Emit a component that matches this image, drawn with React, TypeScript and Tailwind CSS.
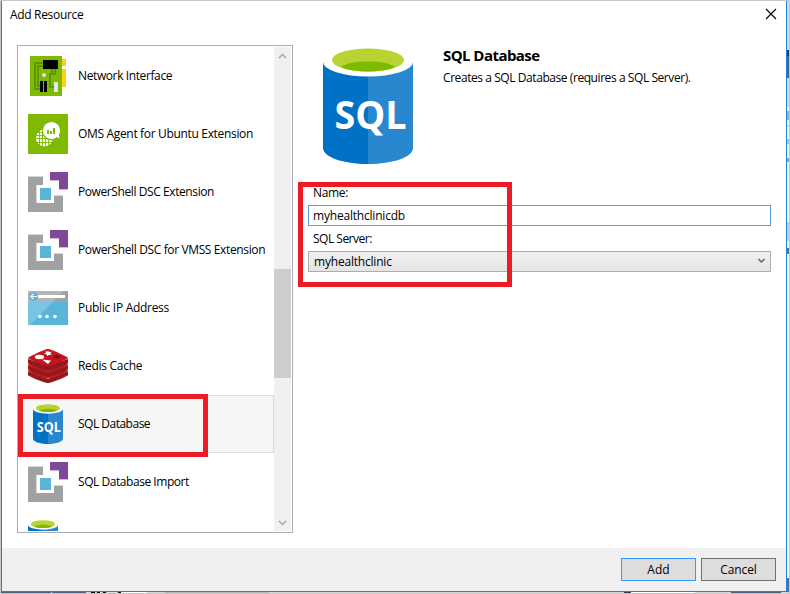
import React from "react";

function NetworkIcon() {
  return (
    <svg width="40" height="40" viewBox="0 0 40 40" shapeRendering="crispEdges">
      <path d="M34 3h4v7h-4zM34 13h4v18h-4z" fill="#fcd116" />
      <path d="M2 0h32v40H2z" fill="#7fba00" />
      <path d="M15 7H7v26h5M15 10h-5v20h2M27 13v5h-5v13h4M24 13v5" fill="none" stroke="#5e9400" strokeWidth="2" />
      <path d="M15 4h15v9H15zM12 25h3v11h-3zM16 25h3v11h-3z" fill="#000" />
      <path d="M26 26h4v10h-4z" fill="#e6e6e6" />
      <circle cx="16" cy="19" r="2" fill="#e6e6e6" shapeRendering="auto" />
    </svg>
  );
}

function OmsIcon() {
  return (
    <svg width="40" height="40" viewBox="0 0 40 40">
      <path d="M0 0h40v40H0z" fill="#7fba00" />
      <circle cx="16.5" cy="24" r="8.5" fill="#fff" />
      <path d="M11.5 15v18M14.5 15v18M17.5 15v18M20.5 15v18M7 18.5h18M7 21.5h18M7 24.5h18M7 28.5h18" stroke="#7fba00" strokeWidth="0.9" />
      <circle cx="23.5" cy="17" r="9.6" fill="#7fba00" />
      <circle cx="23.5" cy="16.5" r="8.6" fill="#fff" />
      <path d="M27 22l4.500 2.500-1-6z" fill="#fff" />
      <path d="M19 16h2v4h-2zM22 17h2v3h-2zM25 14h2v6h-2z" fill="#7fba00" />
    </svg>
  );
}

function ExtensionIcon() {
  return (
    <svg width="40" height="40" viewBox="0 0 40 40" shapeRendering="crispEdges">
      <path d="M0 4h15v1H0zM8 12h7v1H8zM26 23h9v1h-9z" fill="#d5d6d8" />
      <path d="M0 5h15v8H9v18h17v-7h9v16H0z" fill="#a0a1a2" />
      <path d="M8 13h1v18H8z" fill="#d5d6d8" />
      <path d="M22 0h18v17h-9V8h-9z" fill="#804998" />
      <path d="M22 8h9v1h-9zM31 17h9v1h-9z" fill="#d0b8da" />
      <path d="M12 16h11v12H12z" fill="#59b4d9" />
    </svg>
  );
}

function PublicIpIcon() {
  return (
    <svg width="40" height="34" viewBox="0 0 40 34">
      <path d="M0 0h40v34H0z" fill="#59b4d9" />
      <path d="M0 0h40v10H0z" fill="#a0a1a2" />
      <path d="M0 10h26L2 34H0z" fill="#7ac3e1" />
      <path d="M0 0h36L26 10H0z" fill="#b3b4b5" />
      <path d="M10 4h27v3H10z" fill="#fff" />
      <circle cx="5.500" cy="5.500" r="4.500" fill="#59b4d9" />
      <path d="M9 5.500H3M5.500 2.800L2.800 5.500l2.700 2.700" fill="none" stroke="#fff" strokeWidth="1.200" />
      <circle cx="12" cy="25.500" r="1.800" fill="#fff" />
      <circle cx="19" cy="25.500" r="1.800" fill="#fff" />
      <circle cx="27" cy="25.500" r="1.800" fill="#fff" />
    </svg>
  );
}

function RedisIcon() {
  return (
    <svg width="40" height="34" viewBox="0 0 40 34">
      <path d="M0 22l20 8 20-8v4c0 1-16 8-20 8S0 27 0 26z" fill="#921a1d" />
      <path d="M0 21l20-7 20 7c0 2-16 8.500-20 8.500S0 23 0 21z" fill="#c4161c" />
      <path d="M0 16l20 8 20-8v4c0 1-16 7.500-20 7.500S0 21 0 20z" fill="#921a1d" />
      <path d="M0 15l20-7 20 7c0 2-16 8.500-20 8.500S0 17 0 15z" fill="#c4161c" />
      <path d="M0 10l20 7 20-7v4c0 1-16 7.500-20 7.500S0 15 0 14z" fill="#921a1d" />
      <path d="M0 9C0 8 17 0 20 0s20 8 20 9-16 8-20 8S0 10 0 9z" fill="#c4161c" />
      <ellipse cx="11.500" cy="8" rx="4.600" ry="2.200" fill="#fff" />
      <path d="M14 10.500l9 1-3 3.500z" fill="#fff" />
      <path d="M20 1.500l1 1.500 3-.3-1.700 1.500 1.700 1.500-3 .1-1.500 1.500-1-2-2.500-.3 2-1.300-1-1.500 2.200.5z" fill="#fff" />
      <path d="M25 8l4-2.500L33.500 8 29 10z" fill="#8a1014" />
    </svg>
  );
}

function SqlIcon({ width, height, label = true }: { width: number; height: number; label?: boolean }) {
  return (
    <svg width={width} height={height} viewBox="0 0 90 116" preserveAspectRatio="none" className="shrink-0">
      <path d="M0 14v86c0 9 20 16 45 16V14z" fill="#0072c6" />
      <path d="M45 116c25 0 45-7 45-16V14H45z" fill="#2987cf" />
      <ellipse cx="45" cy="14" rx="45" ry="14.500" fill="#fff" />
      <ellipse cx="45" cy="12" rx="36" ry="11.500" fill="#b8d432" />
      <path d="M18 19c5-4 15-5.500 27-5.500S67 15 72 19c-6 3-16 4.500-27 4.500S24 22 18 19z" fill="#7fba00" />
      {label && (
        <text x="11.500" y="81" textLength="72" lengthAdjust="spacingAndGlyphs" fill="#fff" fontSize="40" fontWeight="700" fontFamily="'Open Sans', 'Noto Sans', sans-serif">SQL</text>
      )}
    </svg>
  );
}

function Chevron({ up = false, color }: { up?: boolean; color: string }) {
  return (
    <svg width="9" height="6" viewBox="0 0 9 6">
      <path d={up ? "M1 5l3.500-3.500L8 5" : "M1 1l3.500 3.500L8 1"} fill="none" stroke={color} strokeWidth="1.400" />
    </svg>
  );
}

const resources = [
  { name: "Network Interface", icon: <NetworkIcon />, tracking: "tracking-[-0.39px]" },
  { name: "OMS Agent for Ubuntu Extension", icon: <OmsIcon />, tracking: "tracking-[-0.33px]" },
  { name: "PowerShell DSC Extension", icon: <ExtensionIcon />, tracking: "tracking-[-0.41px]" },
  { name: "PowerShell DSC for VMSS Extension", icon: <ExtensionIcon />, tracking: "tracking-[-0.37px]" },
  { name: "Public IP Address", icon: <PublicIpIcon />, tracking: "tracking-[-0.29px]" },
  { name: "Redis Cache", icon: <RedisIcon />, tracking: "tracking-[-0.3px]" },
  { name: "SQL Database", icon: <SqlIcon width={30} height={40} />, tracking: "tracking-[-0.5px]", selected: true },
  { name: "SQL Database Import", icon: <ExtensionIcon />, tracking: "tracking-[-0.45px]" },
];

function ResourceList() {
  return (
    <div className="flex h-[488px] w-[276px] shrink-0 border border-[#abadb3] p-px">
      <div className="h-[484px] flex-1 overflow-hidden">
        {resources.map((r) => (
          <div
            key={r.name}
            className={
              "flex h-[58px] items-center border pl-2 " +
              (r.selected ? "border-[#dadada] bg-[#f6f6f6]" : "border-transparent")
            }
          >
            <div className="flex w-10 shrink-0 justify-center">{r.icon}</div>
            <span className={"ml-[10px] whitespace-nowrap " + r.tracking}>{r.name}</span>
          </div>
        ))}
        <div className="flex h-[58px] items-center border border-transparent pl-2">
          <SqlIcon width={30} height={40} label={false} />
        </div>
      </div>
      <div className="flex w-[17px] flex-col items-center bg-[#f0f0f0]">
        <div className="flex h-[17px] items-center"><Chevron up color="#a3a3a3" /></div>
        <div className="mt-[205px] h-[109px] w-full bg-[#cdcdcd]" />
        <div className="mt-auto flex h-[17px] items-center"><Chevron color="#a3a3a3" /></div>
      </div>
    </div>
  );
}

function Details() {
  return (
    <section className="ml-[15px] w-[463px]">
      <div className="flex h-[120px] pl-[15px] pt-[3px]">
        <SqlIcon width={90} height={116} />
        <div className="ml-[30px]">
          <h1 className="mt-[-3px] text-[15px] font-bold leading-[20px] tracking-[-0.55px]">SQL Database</h1>
          <p className="mt-[5px] whitespace-nowrap leading-4 tracking-[-0.43px]">Creates a SQL Database (requires a SQL Server).</p>
        </div>
      </div>
      <label className="mt-[20px] block pl-[5px] leading-4 tracking-[-0.35px]">Name:</label>
      <div className="mt-[4px] flex h-[21px] items-center border border-[#569de5] pl-[4px] tracking-[-0.2px]">myhealthclinicdb</div>
      <label className="mt-[5px] block pl-[5px] leading-4 tracking-[-0.5px]">SQL Server:</label>
      <div className="mt-[4px] flex h-[21px] items-center justify-between border border-[#acacac] bg-linear-to-b from-[#f0f0f0] to-[#e5e5e5] pl-[5px] pr-[4px]">
        <span className="tracking-[-0.2px]">myhealthclinic</span>
        <svg className="mb-[2px]" width="9" height="6" viewBox="0 0 9 6">
          <path d="M1.500 1l3 3 3-3" fill="none" stroke="#606060" strokeWidth="1.500" />
        </svg>
      </div>
    </section>
  );
}

export default function App() {
  return (
    <div className="relative flex h-[594px] w-[790px] flex-col overflow-hidden border border-[#c8c8c8] bg-white font-['Open_Sans','Noto_Sans',sans-serif] text-[12px] leading-4 text-black">
      <div className="flex h-[591px]">
        <main className="flex w-[786px] flex-col border-x border-b border-[#1883d7]">
          <header className="flex h-[44px] justify-between pl-[8px] pr-[9px] pt-[6px]">
            <span className="tracking-[-0.32px]">Add Resource</span>
            <svg className="mt-px" width="12" height="12" viewBox="0 0 12 12">
              <path d="M1 1l10 10M11 1L1 11" stroke="#000" strokeWidth="1.100" />
            </svg>
          </header>
          <div className="flex h-[503px] pl-[15px]">
            <ResourceList />
            <Details />
          </div>
          <footer className="flex flex-1 justify-end gap-[5px] bg-[#f0f0f0] pr-[10px] pt-[10px]">
            <button className="h-[23px] w-[75px] border border-[#3399ff] bg-[#dddddd] leading-[21px]">Add</button>
            <button className="h-[23px] w-[75px] border border-[#707070] bg-[#dddddd] leading-[21px] tracking-[-0.1px]">Cancel</button>
          </footer>
        </main>
        <aside className="flex w-[2px] flex-col bg-white">
          <div className="h-[49px] bg-[#d6dbe9]" />
          <div className="h-[6px] bg-[#293955]" />
          <div className="h-[22px] bg-[#4d6082]" />
          <div className="h-[29px] bg-[#d6dbe9]" />
          <div className="mt-[4px] h-[9px] bg-[#9cabd0]" />
          <div className="mt-[5px] h-[2px] bg-[#d6dbe9]" />
          <div className="mt-[12px] h-[5px] bg-[#8fd0e8]" />
          <div className="mt-[14px] h-[4px] bg-[#5ab4ef]" />
          <div className="mt-[60px] h-[19px] bg-[#cccedb]" />
          <div className="mt-[7px] h-[6px] bg-[#4e7896]" />
          <div className="mt-auto h-[14px] bg-[#5b6c96]" />
        </aside>
      </div>
      <div className="flex h-px bg-[#d4d7de]">
        <div className="w-[50px] bg-[#4d6082]" />
        <div className="ml-px w-[34px] bg-[#4d6082]" />
        <div className="ml-[5px] w-[4px] bg-black" />
        <div className="ml-[2px] w-[3px] bg-black" />
        <div className="ml-[3px] w-[3px] bg-black" />
        <div className="ml-[12px] w-[3px] bg-black" />
        <div className="w-[26px] bg-white" />
        <div className="ml-[18px] w-[104px] bg-[#b5b8bd]" />
        <div className="ml-[355px] w-[7px] bg-[#293955]" />
        <div className="w-[64px] bg-white" />
        <div className="ml-[36px] w-[50px] bg-[#4d6082]" />
      </div>
      <div className="absolute left-[17px] top-[393px] h-[63px] w-[190px] border-[5px] border-[#ed1c24]" />
      <div className="absolute left-[297px] top-[181px] h-[105px] w-[214px] border-[5px] border-[#ed1c24]" />
    </div>
  );
}
